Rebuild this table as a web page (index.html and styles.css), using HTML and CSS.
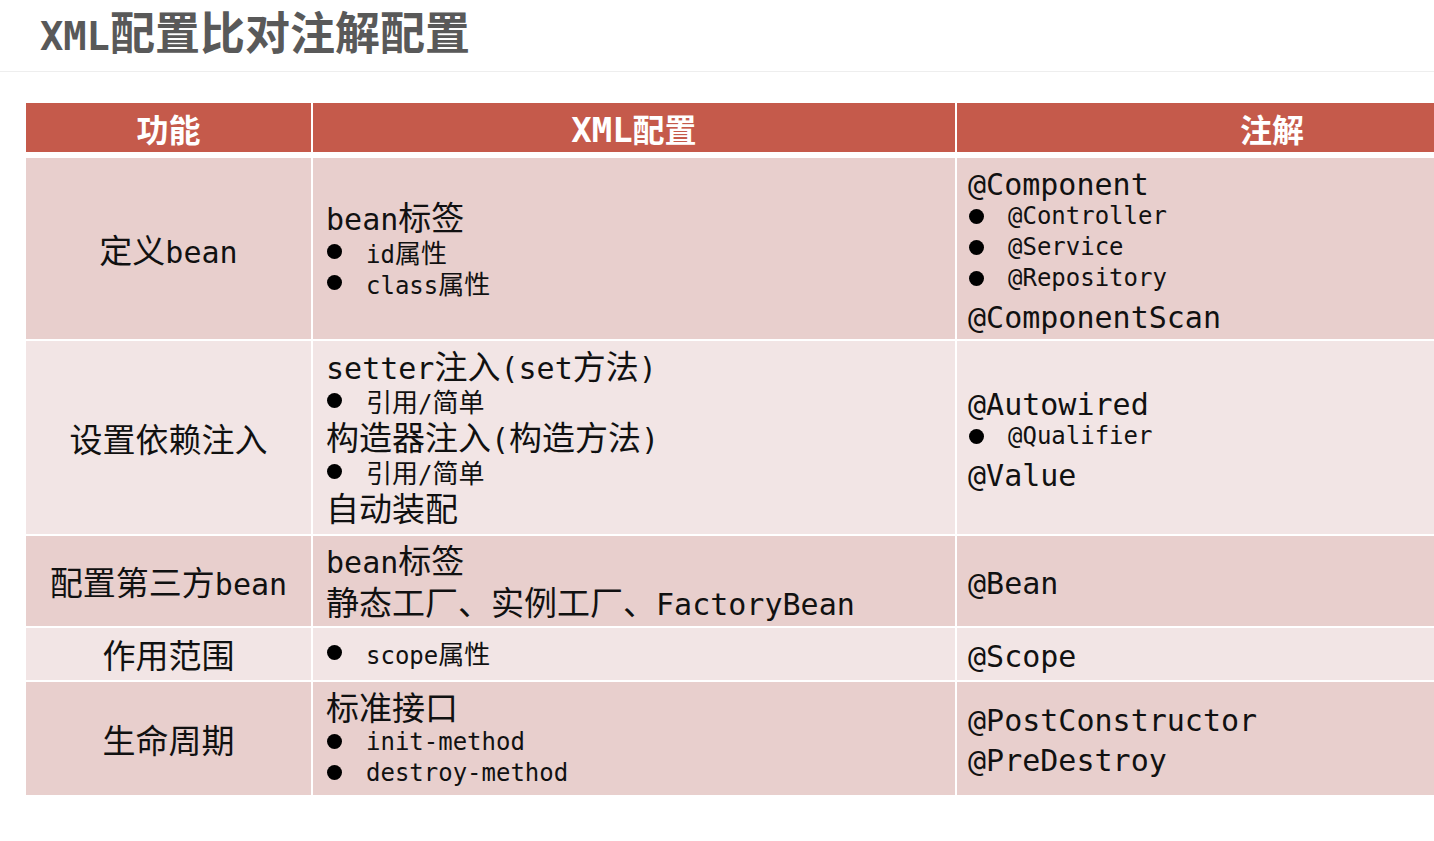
FILE: index.html
```html
<!DOCTYPE html>
<html lang="zh-CN">
<head>
<meta charset="utf-8">
<title>XML配置比对注解配置</title>
<link rel="stylesheet" href="styles.css">
</head>
<body>
<header class="title-bar">
  <h1 class="title"><span class="m">XML</span>配置比对注解配置</h1>
</header>
<main class="table">
  <div class="thead">
    <div class="th">功能</div>
    <div class="th"><span><span class="m">XML</span>配置</span></div>
    <div class="th">注解</div>
  </div>
  <div class="tbody">
    <div class="td c1 dark"><span>定义<span class="m">bean</span></span></div>
    <div class="td dark">
      <div class="ln"><span class="m">bean</span>标签</div>
      <div class="li"><i class="dot"></i><span><span class="m">id</span>属性</span></div>
      <div class="li"><i class="dot"></i><span><span class="m">class</span>属性</span></div>
    </div>
    <div class="td c3 dark">
      <div class="ln"><span class="m">@Component</span></div>
      <div class="li"><i class="dot"></i><span class="m">@Controller</span></div>
      <div class="li"><i class="dot"></i><span class="m">@Service</span></div>
      <div class="li"><i class="dot"></i><span class="m">@Repository</span></div>
      <div class="ln"><span class="m">@ComponentScan</span></div>
    </div>

    <div class="td c1 light"><span>设置依赖注入</span></div>
    <div class="td light">
      <div class="ln"><span class="m">setter</span>注入<span class="m">(set</span>方法<span class="m">)</span></div>
      <div class="li"><i class="dot"></i><span>引用<span class="m">/</span>简单</span></div>
      <div class="ln">构造器注入<span class="m">(</span>构造方法<span class="m">)</span></div>
      <div class="li"><i class="dot"></i><span>引用<span class="m">/</span>简单</span></div>
      <div class="ln">自动装配</div>
    </div>
    <div class="td c3 light">
      <div class="ln"><span class="m">@Autowired</span></div>
      <div class="li"><i class="dot"></i><span class="m">@Qualifier</span></div>
      <div class="ln"><span class="m">@Value</span></div>
    </div>

    <div class="td c1 dark"><span>配置第三方<span class="m">bean</span></span></div>
    <div class="td dark">
      <div class="ln tall"><span class="m">bean</span>标签</div>
      <div class="ln tall">静态工厂、实例工厂、<span class="m">FactoryBean</span></div>
    </div>
    <div class="td c3 dark">
      <div class="ln"><span class="m">@Bean</span></div>
    </div>

    <div class="td c1 light"><span>作用范围</span></div>
    <div class="td light">
      <div class="li"><i class="dot"></i><span><span class="m">scope</span>属性</span></div>
    </div>
    <div class="td c3 light">
      <div class="ln"><span class="m">@Scope</span></div>
    </div>

    <div class="td c1 dark"><span>生命周期</span></div>
    <div class="td dark">
      <div class="ln">标准接口</div>
      <div class="li"><i class="dot"></i><span class="m">init-method</span></div>
      <div class="li"><i class="dot"></i><span class="m">destroy-method</span></div>
    </div>
    <div class="td c3 dark">
      <div class="ln"><span class="m">@PostConstructor</span></div>
      <div class="ln"><span class="m">@PreDestroy</span></div>
    </div>
  </div>
</main>
</body>
</html>
```

FILE: styles.css
```css
html, body {
  margin: 0;
  padding: 0;
  background: #ffffff;
}
body {
  width: 1434px;
  height: 841px;
  overflow: hidden;
  font-family: "Noto Sans CJK SC", "Noto Sans", sans-serif;
  color: #111111;
}
.m {
  font-family: "DejaVu Sans Mono", "Liberation Mono", monospace;
  font-size: 0.91em;
  line-height: 1;
}
.title-bar {
  height: 72px;
  border-bottom: 1px solid #eeeeee;
  display: flex;
  align-items: center;
  padding: 0 0 6px 40px;
  box-sizing: border-box;
}
.title {
  margin: 0;
  font-size: 45px;
  font-weight: 700;
  color: #595959;
  line-height: 1;
  white-space: nowrap;
}
.title .m {
  font-size: 0.86em;
}
.table {
  margin: 31px 0 0 26px;
  width: 1561px;
}
.thead,
.tbody {
  display: grid;
  grid-template-columns: 285px 642px 630px;
  column-gap: 2px;
}
.thead {
  height: 49px;
}
.th {
  background: #c55a4b;
  color: #ffffff;
  font-weight: 700;
  font-size: 32px;
  display: flex;
  align-items: center;
  justify-content: center;
  padding-top: 1px;
  box-sizing: border-box;
  white-space: nowrap;
}
.th .m {
  font-size: 1.06em;
}
.tbody {
  margin-top: 6px;
  grid-template-rows: 181px 193px 90px 52px 113px;
  row-gap: 2px;
}
.td {
  display: flex;
  flex-direction: column;
  justify-content: center;
  padding-left: 13px;
  padding-bottom: 3px;
  font-size: 33px;
  box-sizing: border-box;
}
.td.c1 {
  align-items: center;
  padding-left: 0;
  padding-bottom: 0;
  line-height: 40px;
  white-space: nowrap;
}
.td.c3 {
  padding-left: 11px;
}
.dark {
  background: #e8cfcd;
}
.light {
  background: #f2e5e5;
}
.ln {
  line-height: 40px;
  white-space: nowrap;
}
.ln.tall {
  line-height: 42px;
}
.li {
  display: flex;
  align-items: center;
  height: 31px;
  font-size: 26px;
  white-space: nowrap;
}
.li .m {
  font-size: 0.923em;
}
.dot {
  display: block;
  width: 15px;
  height: 15px;
  border-radius: 50%;
  background: #000000;
  margin: 0 24px 0 1px;
  flex: none;
}
```
